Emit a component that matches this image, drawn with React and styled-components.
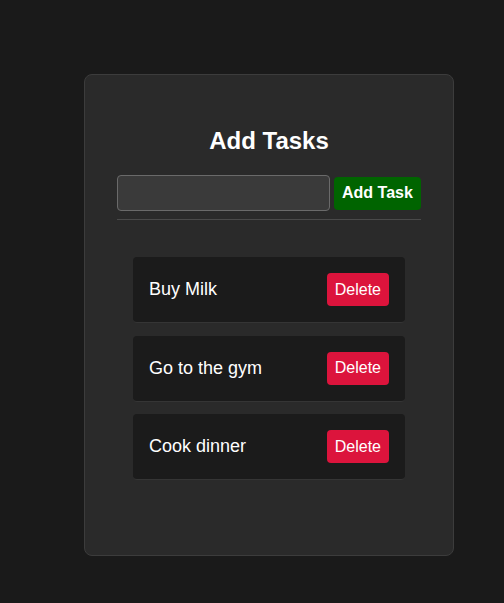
import React, { useState } from "react";
import styled, { createGlobalStyle } from "styled-components";

const Global = createGlobalStyle`
  html, body {
    margin: 0;
    background: #1a1a1a;
    font-family: "Liberation Sans", Arial, sans-serif;
    color: #fff;
  }
`;

const Page = styled.div`
  min-height: 603px;
  padding: 74px 0 0 84px;
  box-sizing: border-box;
`;

const Card = styled.div`
  width: 370px;
  height: 482px;
  box-sizing: border-box;
  background: #2a2a2a;
  border: 1px solid #3c3c3c;
  border-radius: 8px;
  padding: 32px 32px;
`;

const Title = styled.h2`
  margin: 20px 0 20px;
  font-size: 24px;
  font-weight: bold;
  text-align: center;
`;

const Form = styled.div`
  display: flex;
  align-items: center;
  gap: 4px;
  padding-bottom: 8px;
  border-bottom: 1px solid #4a4a4a;
`;

const Input = styled.input`
  width: 213px;
  height: 36px;
  box-sizing: border-box;
  background: #3a3a3a;
  border: 1px solid #6a6a6a;
  border-radius: 4px;
  color: #fff;
  font-size: 16px;
  padding: 0 8px;
  outline: none;
`;

const Button = styled.button`
  height: 33px;
  padding: 0 8px;
  border: none;
  border-radius: 4px;
  color: #fff;
  font-family: "Liberation Sans", Arial, sans-serif;
  font-size: 16px;
  font-weight: ${p => (p.bold ? "bold" : "normal")};
  background: ${p => p.color};
  cursor: pointer;
  white-space: nowrap;
`;

const List = styled.ul`
  list-style: none;
  margin: 37px 16px 0;
  padding: 0;
  display: flex;
  flex-direction: column;
  gap: 12.5px;
`;

const Item = styled.li`
  height: 66px;
  box-sizing: border-box;
  display: flex;
  align-items: center;
  justify-content: space-between;
  padding: 0 16px;
  background: #1b1b1b;
  border-bottom: 1px solid #353535;
  border-radius: 4px;
  font-size: 18px;
`;

export default function App() {
  const [tasks, setTasks] = useState(["Buy Milk", "Go to the gym", "Cook dinner"]);
  const [text, setText] = useState("");

  const add = () => {
    if (!text.trim()) return;
    setTasks([...tasks, text.trim()]);
    setText("");
  };

  return (
    <>
      <Global />
      <Page>
        <Card>
          <Title>Add Tasks</Title>
          <Form>
            <Input value={text} onChange={e => setText(e.target.value)} />
            <Button bold color="#006400" onClick={add}>Add Task</Button>
          </Form>
          <List>
            {tasks.map((t, i) => (
              <Item key={i}>
                {t}
                <Button color="#dc143c" onClick={() => setTasks(tasks.filter((_, j) => j !== i))}>
                  Delete
                </Button>
              </Item>
            ))}
          </List>
        </Card>
      </Page>
    </>
  );
}
